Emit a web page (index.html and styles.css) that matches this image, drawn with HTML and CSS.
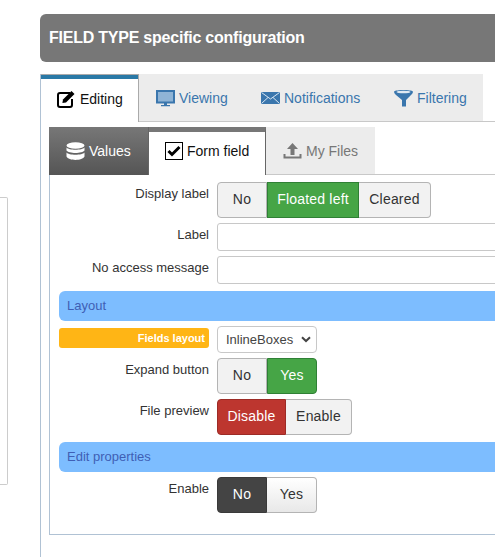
FILE: index.html
```html
<!DOCTYPE html>
<html lang="en">
<head>
  <meta charset="UTF-8" />
  <title>Field configuration</title>
  <link rel="stylesheet" href="styles.css">
</head>
<body>
  <aside class="side-box"></aside>

  <main class="main">
    <h2 class="title">FIELD TYPE specific configuration</h2>

    <div class="outer">
      <ul class="tabs">
        <li class="tab active">
          <svg class="icon" width="19" height="18" viewBox="0 0 19 18">
            <path d="M13 3H3a2 2 0 0 0-2 2v10a2 2 0 0 0 2 2h10a2 2 0 0 0 2-2V9" fill="none" stroke="#000" stroke-width="2"/>
            <path d="M6 9.500 14.500 1l3 3L9 12.500l-3.600.6z" fill="#000"/>
          </svg>
          Editing
        </li>
        <li class="tab viewing">
          <svg class="icon" width="19" height="18" viewBox="0 0 19 18">
            <rect x="1" y="2" width="17" height="11.500" fill="#8fb4d6" stroke="#3a76ad" stroke-width="2"/>
            <path d="M8 14h3v2h3v1.300H5V16h3z" fill="#3a76ad"/>
          </svg>
          Viewing
        </li>
        <li class="tab notifications">
          <svg class="icon" width="19" height="18" viewBox="0 0 19 18">
            <rect x="0" y="3" width="19" height="12" fill="#3a76ad"/>
            <path d="M.5 3.500 9.500 10l9-6.500M.5 14.500l6.500-6M18.500 14.500l-6.500-6" fill="none" stroke="#d8e6f2" stroke-width="1"/>
          </svg>
          Notifications
        </li>
        <li class="tab filtering">
          <svg class="icon" width="19" height="18" viewBox="0 0 19 18">
            <path d="M0 2.500C2 .5 17 .5 19 2.500c0 1.500-1 2.500-2 3.500l-5 5v6.500H8V11L2 6C1 5 0 4 0 2.500z" fill="#3a76ad"/>
            <ellipse cx="9.500" cy="3" rx="7" ry="1.300" fill="#dfe9f2"/>
          </svg>
          Filtering
        </li>
      </ul>

      <div class="inner">
        <ul class="tabs sub-tabs">
          <li class="tab values">
            <svg class="icon" width="19" height="19" viewBox="0 0 19 19">
              <ellipse cx="9.500" cy="3.500" rx="9" ry="3.200" fill="#fff"/>
              <path d="M.5 5.500c2 3 16 3 18 0v3c-2 3.300-16 3.300-18 0zM.5 10.500c2 3 16 3 18 0v4c-2 4.500-16 4.500-18 0z" fill="#fff"/>
            </svg>
            Values
          </li>
          <li class="tab form-field">
            <svg class="icon" width="18" height="18" viewBox="0 0 18 18">
              <rect x=".5" y=".5" width="17" height="17" fill="#fff" stroke="#000"/>
              <path d="M3.500 9 7 12.500 14.500 5" fill="none" stroke="#000" stroke-width="3"/>
            </svg>
            Form field
          </li>
          <li class="tab my-files">
            <svg class="icon" width="19" height="18" viewBox="0 0 19 18">
              <path d="M9.500 1 15 7h-3.500v6h-4V7H4z" fill="#777"/>
              <path d="M.5 12v4.500h18V12h-2v2.500h-14V12z" fill="#777"/>
            </svg>
            My Files
          </li>
        </ul>

        <div class="panel">
          <div class="row">
            <label class="row-label">Display label</label>
            <div class="btn-group">
              <span class="btn w50">No</span>
              <span class="btn w92 on-green">Floated left</span>
              <span class="btn w72">Cleared</span>
            </div>
          </div>
          <div class="row">
            <label class="row-label">Label</label>
            <input class="text-input" type="text">
          </div>
          <div class="row">
            <label class="row-label">No access message</label>
            <input class="text-input" type="text">
          </div>

          <div class="bar">Layout</div>

          <div class="row">
            <span class="badge">Fields layout</span>
            <div class="select-wrap">
              <select class="select-input">
                <option>InlineBoxes</option>
              </select>
              <svg class="select-arrow" width="10" height="7" viewBox="0 0 10 7">
                <path d="M1 1.200 5 5l4-3.800" fill="none" stroke="#444" stroke-width="2"/>
              </svg>
            </div>
          </div>
          <div class="row">
            <label class="row-label">Expand button</label>
            <div class="btn-group">
              <span class="btn w50">No</span>
              <span class="btn w50 on-green">Yes</span>
            </div>
          </div>
          <div class="row">
            <label class="row-label">File preview</label>
            <div class="btn-group">
              <span class="btn w69 on-red">Disable</span>
              <span class="btn w66">Enable</span>
            </div>
          </div>

          <div class="bar">Edit properties</div>

          <div class="row">
            <label class="row-label">Enable</label>
            <div class="btn-group">
              <span class="btn w50 on-dark">No</span>
              <span class="btn w50 raised">Yes</span>
            </div>
          </div>
        </div>
      </div>
    </div>
  </main>
</body>
</html>
```

FILE: styles.css
```css
:root {
  --line-blue: #b0c2d4;
  --line-grey: #c8c8c8;
  --tab-bg: #ececec;
  --link-blue: #3a76ad;
}

* {
  box-sizing: border-box;
}

html, body {
  width: 495px;
  height: 557px;
  overflow: hidden;
}

body {
  margin: 0;
  display: flex;
  align-items: flex-start;
  font-family: "Liberation Sans", Arial, sans-serif;
  font-size: 14px;
  color: #333;
  background: #fff;
}

.side-box {
  flex: none;
  width: 8px;
  height: 288px;
  margin-top: 197px;
  border: 1px solid #ccc;
  border-left: 0;
  border-radius: 0 2px 2px 0;
}

.main {
  flex: none;
  width: 455px;
  margin-left: 32px;
  padding-top: 14px;
  overflow: hidden;
}

.title {
  width: 480px;
  height: 48px;
  margin: 0;
  padding-left: 9px;
  background: #777;
  border-radius: 6px;
  color: #fff;
  font-size: 16px;
  font-weight: bold;
  letter-spacing: -0.23px;
  line-height: 47px;
}

.outer {
  height: 483px;
  margin-top: 12px;
  border-left: 1px solid var(--line-blue);
}

.tabs {
  display: flex;
  margin: 0;
  padding: 0;
  list-style: none;
  border-bottom: 1px solid var(--line-grey);
}

.tab {
  flex: none;
  display: flex;
  align-items: center;
  gap: 4px;
  height: 47px;
  padding: 0 17px;
  background: var(--tab-bg);
  color: var(--link-blue);
  white-space: nowrap;
}

.tab.active {
  width: 98px;
  height: 48px;
  margin-bottom: -1px;
  padding: 0 0 0 16px;
  background: #fff;
  color: #111;
  border-top: 1px solid #aaa;
  box-shadow: inset 0 4px 0 #2a79a6;
  border-right: 1px solid #aaa;
}

.tab.viewing { width: 105px; }
.tab.notifications { width: 133px; }
.tab.filtering { width: 106px; }

.icon {
  flex: none;
}

.inner {
  margin-top: 5px;
  padding-left: 8px;
}

.tab.values {
  width: 100px;
  height: 48px;
  margin-bottom: -1px;
  border-right: 1px solid #666;
  background: linear-gradient(#777, #555);
  color: #fff;
}

.tab.form-field {
  width: 117px;
  height: 48px;
  margin-bottom: -1px;
  padding: 0 0 5px 16px;
  background: #fff;
  color: #111;
  border-top: 5px solid #777;
  border-right: 1px solid #666;
}

.tab.my-files {
  width: 109px;
  color: #777;
}

.panel {
  display: flex;
  flex-direction: column;
  gap: 5px;
  height: 360px;
  padding: 7px 0 0 9px;
  border-left: 1px solid var(--line-blue);
  border-bottom: 1px solid var(--line-blue);
}

.row {
  display: flex;
  align-items: flex-start;
  gap: 8px;
}

.row-label {
  flex: none;
  width: 150px;
  padding-top: 2px;
  font-size: 13px;
  line-height: 20px;
  text-align: right;
}

.btn-group {
  display: flex;
}

.btn {
  height: 36px;
  border: 1px solid #b4b4b4;
  border-left-width: 0;
  background: #f2f2f2;
  letter-spacing: 0.2px;
  line-height: 33px;
  text-align: center;
}

.btn:first-child {
  border-left-width: 1px;
  border-radius: 4px 0 0 4px;
}

.btn:last-child {
  border-radius: 0 4px 4px 0;
}

.w50 { width: 50px; }
.w66 { width: 66px; }
.w69 { width: 69px; }
.w72 { width: 72px; }
.w92 { width: 92px; }

.on-green {
  background: #46a546;
  border: 1px solid #2f8035;
  color: #fff;
}

.on-red {
  background: #bd362f;
  border-color: #9c2b26;
  color: #fff;
}

.on-dark {
  background: #444;
  border-color: #3a3a3a;
  color: #fff;
}

.raised {
  background: linear-gradient(#fff, #e8e8e8);
}

.text-input {
  flex: none;
  width: 300px;
  height: 28px;
  padding: 0 8px;
  border: 1px solid var(--line-grey);
  border-radius: 3px;
  background: #fff;
}

.bar {
  height: 30px;
  margin-top: 2px;
  padding-left: 8px;
  background: #7dbdff;
  border-radius: 6px 0 0 6px;
  color: #3f5fb5;
  font-size: 13px;
  line-height: 29px;
}

.badge {
  flex: none;
  width: 150px;
  height: 20px;
  margin-top: 2px;
  padding-right: 4px;
  background: #ffb515;
  border-radius: 3px;
  color: #fff;
  font-size: 11px;
  font-weight: bold;
  line-height: 20px;
  text-align: right;
}

.select-wrap {
  position: relative;
  width: 100px;
  height: 27px;
}

.select-input {
  appearance: none;
  width: 100%;
  height: 100%;
  padding: 0 0 0 8px;
  border: 1px solid var(--line-grey);
  border-radius: 4px;
  background: #fff;
  color: #444;
  font-family: inherit;
  font-size: 13px;
}

.select-arrow {
  position: absolute;
  top: 10px;
  right: 6px;
}
```
